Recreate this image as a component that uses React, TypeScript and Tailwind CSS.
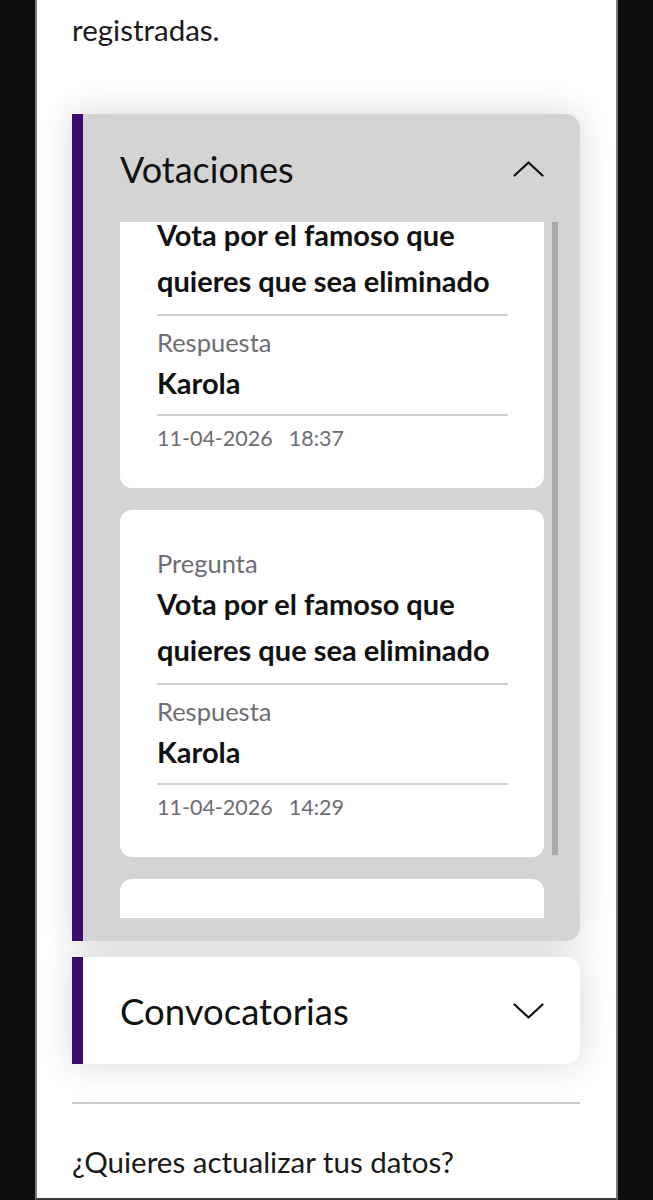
import React from "react";

function Chevron({ up }: { up?: boolean }) {
  return (
    <svg width="31" height="16" viewBox="0 0 31 16" fill="none" className="shrink-0">
      <polyline
        points={up ? "1.5,14.5 15.5,1.5 29.5,14.5" : "1.5,1.5 15.5,14.5 29.5,1.5"}
        stroke="#111111"
        strokeWidth="2.2"
        strokeLinecap="round"
        strokeLinejoin="round"
      />
    </svg>
  );
}

function VoteCard({ time }: { time: string }) {
  return (
    <div className="w-[424px] shrink-0 rounded-[12px] bg-white pl-[37px] pr-[36px] pt-[35px] pb-[34px]">
      <div className="text-[25.5px] leading-[36px] text-[#6d6d72]">Pregunta</div>
      <div className="text-[29px] font-bold leading-[46px] text-[#111111]">
        Vota por el famoso que
        <br />
        quieres que sea eliminado
      </div>
      <div className="mt-[10px] h-[2px] bg-[#cfcfcf]" />
      <div className="mt-[8px] text-[25.5px] leading-[36px] text-[#6d6d72]">Respuesta</div>
      <div className="text-[29px] font-bold leading-[46px] text-[#111111]">Karola</div>
      <div className="mt-[8px] h-[2px] bg-[#cfcfcf]" />
      <div className="mt-[6px] flex gap-[16px] text-[21.5px] leading-[32px] text-[#6d6d72]">
        <span>11-04-2026</span>
        <span>{time}</span>
      </div>
    </div>
  );
}

export default function App() {
  return (
    <div className="h-[1200px] w-[653px] overflow-hidden bg-[#0d0d0f] font-['Lato',sans-serif]">
      <div className="ml-[35px] h-[1200px] w-[583px] border-x-2 border-b-2 border-[#7a7a7a] border-b-[#3a3a3a] bg-white pl-[35px] pr-[36px]">
        <p className="pt-[10px] text-[29.5px] leading-[40px] text-[#1a1a1a]">registradas.</p>

        <div className="mt-[64px] flex h-[827px] rounded-r-[14px] shadow-[0_0_36px_rgba(0,0,0,0.16)]">
          <div className="w-[11px] shrink-0 bg-[#3b0a6b]" />
          <div className="flex flex-1 flex-col rounded-r-[14px] bg-[#d4d4d4] pl-[37px] pr-[22px]">
            <div className="flex h-[108px] shrink-0 items-center justify-between pr-[14px] pt-[2px]">
              <span className="text-[36px] leading-[44px] text-[#111111]">Votaciones</span>
              <Chevron up />
            </div>
            <div className="flex h-[696px] gap-[8px]">
              <div className="h-[696px] w-[424px] overflow-hidden">
                <div className="-mt-[81px] flex flex-col gap-[22px]">
                  <VoteCard time="18:37" />
                  <VoteCard time="14:29" />
                  <VoteCard time="12:05" />
                </div>
              </div>
              <div className="w-[6px] shrink-0">
                <div className="h-[633px] bg-[#a9a9a9]" />
              </div>
            </div>
          </div>
        </div>

        <div className="mt-[16px] flex h-[107px] rounded-r-[14px] bg-white shadow-[0_0_36px_rgba(0,0,0,0.16)]">
          <div className="w-[11px] shrink-0 bg-[#3b0a6b]" />
          <div className="flex flex-1 items-center justify-between pl-[37px] pr-[36px]">
            <span className="text-[36.5px] leading-[44px] text-[#111111]">Convocatorias</span>
            <Chevron />
          </div>
        </div>

        <div className="mt-[38px] h-[2px] bg-[#cccccc]" />

        <p className="mt-[38px] text-[29.5px] leading-[40px] text-[#1a1a1a]">¿Quieres actualizar tus datos?</p>
      </div>
    </div>
  );
}
